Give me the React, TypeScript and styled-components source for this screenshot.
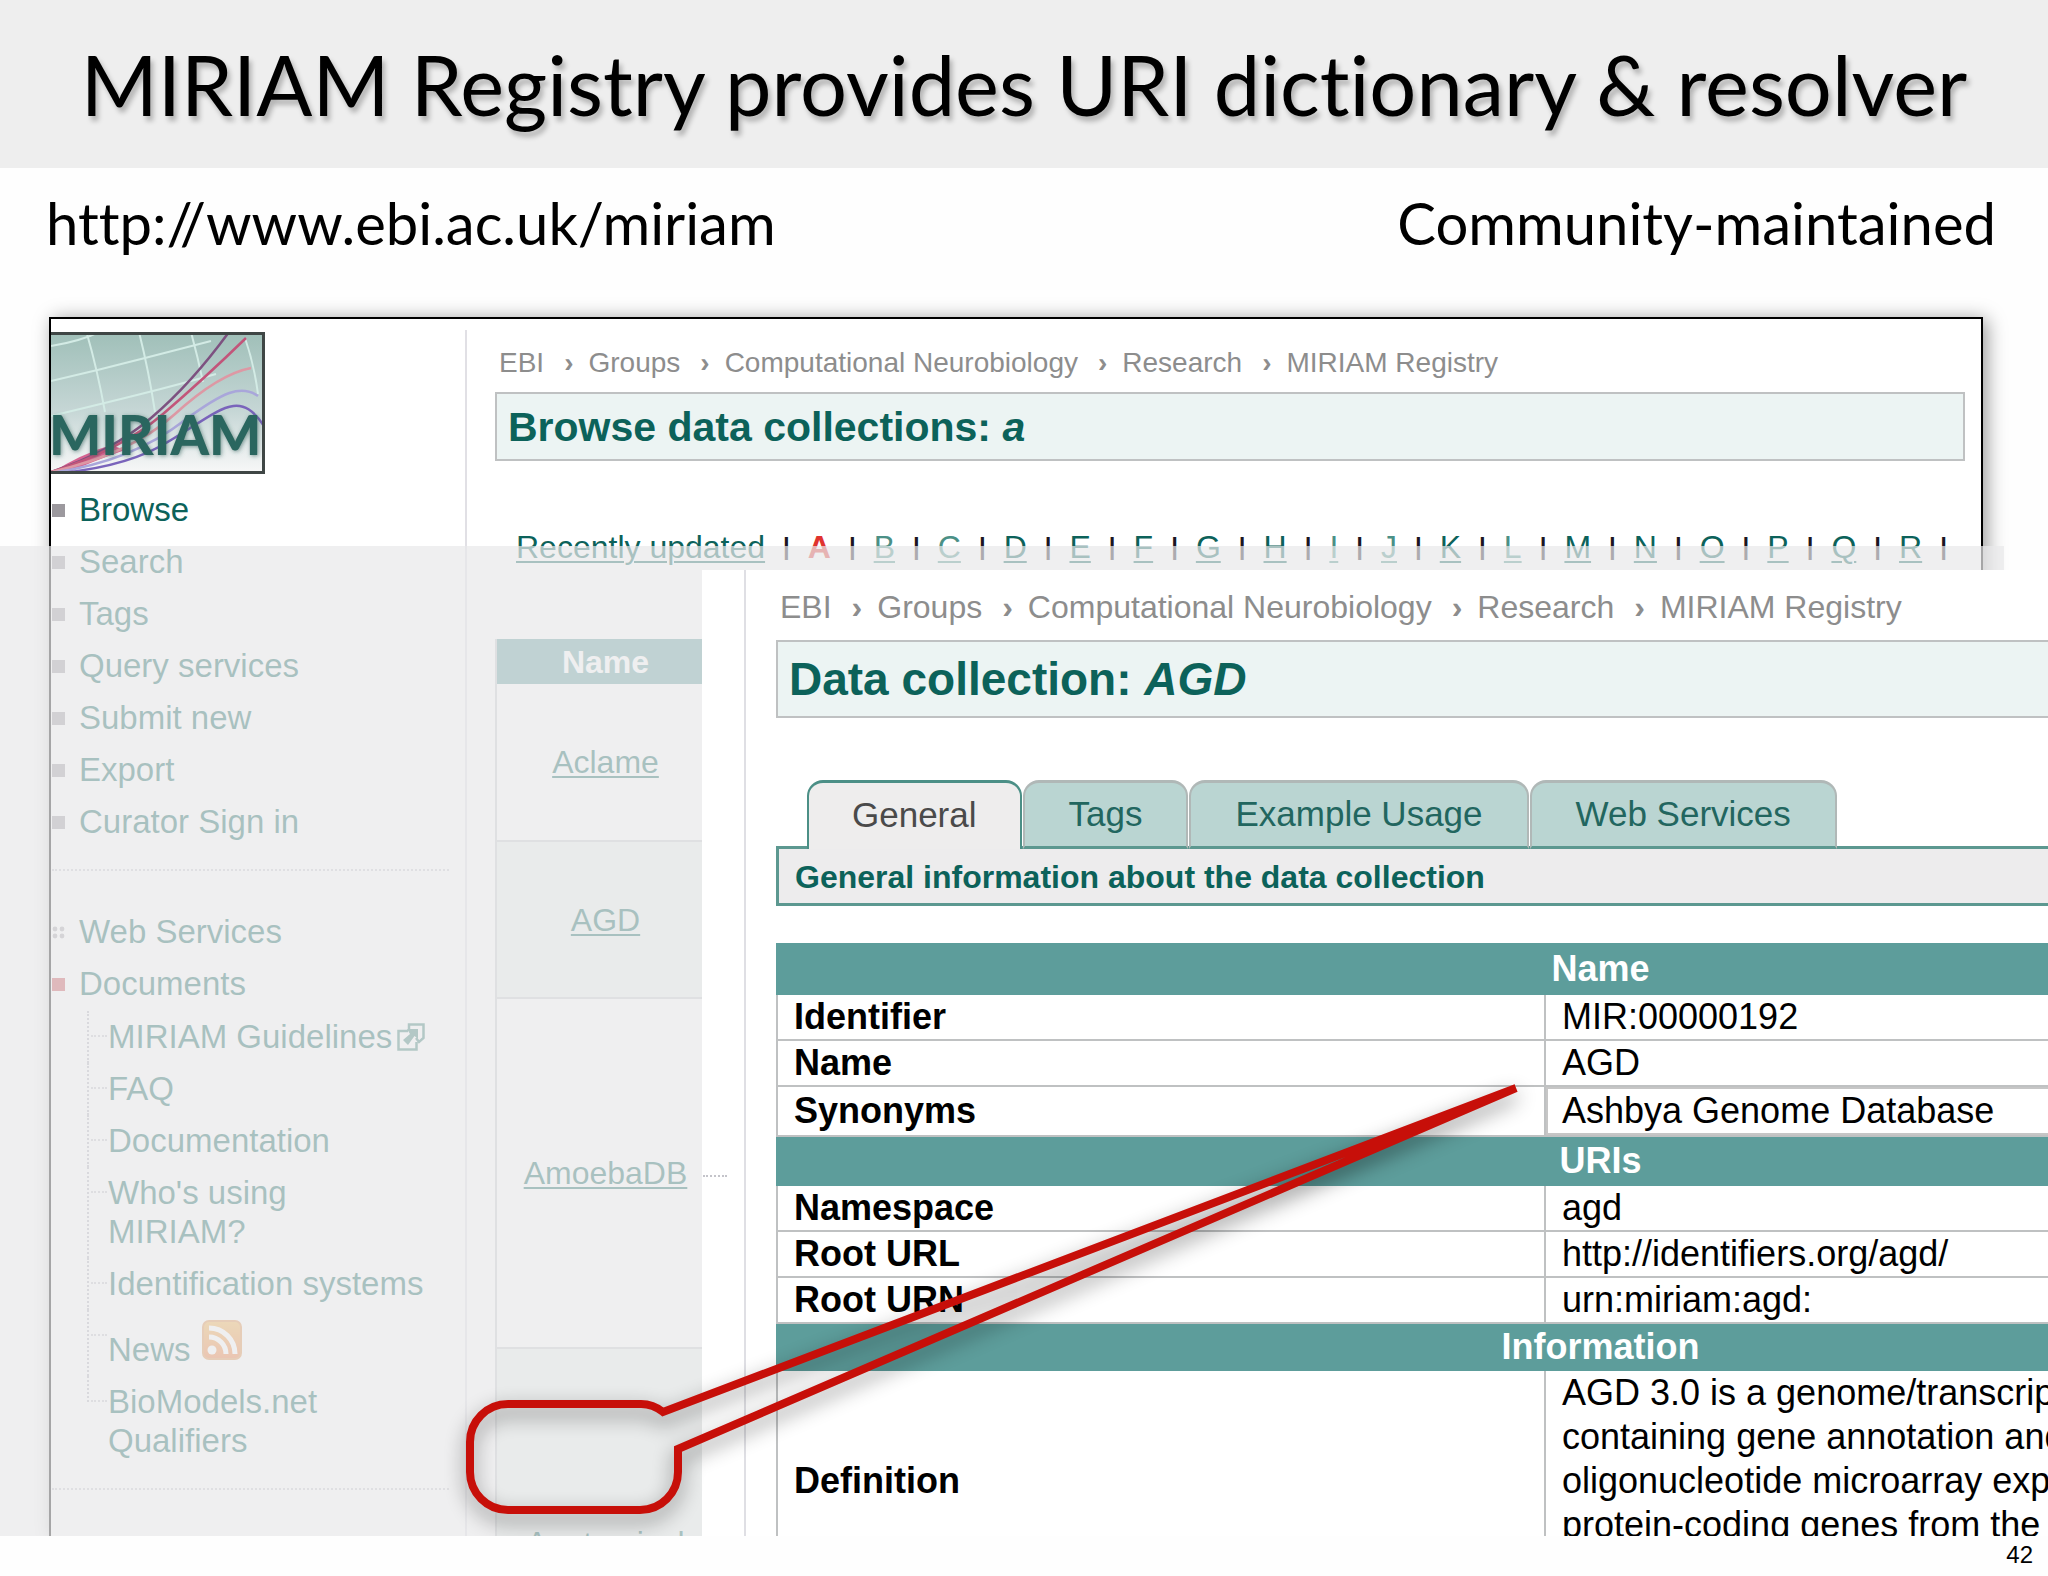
import React from 'react';
import styled, { createGlobalStyle } from 'styled-components';

const TEAL = '#0c625a';
const BAND = '#5d9d9b';
const LINE = '#bfc1c2';

const GlobalStyle = createGlobalStyle`
  *, *::before, *::after { box-sizing: border-box; }
  body {
    margin: 0;
    background: #fff;
    color: #000;
    font-family: "Liberation Sans", Arial, sans-serif;
  }
  a { color: inherit; text-decoration: none; }
  ul, ol { list-style: none; margin: 0; padding: 0; }
`;

const Slide = styled.main`
  display: flex;
  flex-direction: column;
  height: 100vh;
  overflow: hidden;
  background: #fefefe;
`;

const Banner = styled.header`
  display: flex;
  align-items: center;
  justify-content: center;
  height: 168px;
  flex: none;
  background: #eeeeee;
`;

const SlideTitle = styled.h1`
  margin: 0;
  font: 400 83px/100px Lato, "Gill Sans", sans-serif;
  font-variant-ligatures: none;
  white-space: nowrap;
  text-shadow: 3px 5px 5px rgba(0, 0, 0, 0.25);
`;

const SubRow = styled.div`
  display: flex;
  flex: none;
  align-items: center;
  justify-content: space-between;
  height: 129px;
  padding: 0 52px 20px 46px;
  font: 400 58px/76px Lato, "Gill Sans", sans-serif;
  font-variant-ligatures: none;
`;

const Stage = styled.div`
  position: relative;
  display: flex;
  flex: 1;
  min-height: 0;
  overflow: hidden;
  padding: 20px 65px 0 49px;
`;

const BrowseWindow = styled.section`
  display: flex;
  flex: 1;
  min-width: 0;
  border: 2px solid #000;
  border-bottom: 0;
  background: #fff;
  box-shadow: 4px 2px 18px rgba(0, 0, 0, 0.4);
`;

const Sidebar = styled.aside`
  flex: none;
  width: 416px;
  margin-top: 11px;
  padding-top: 2px;
  border-right: 2px solid #e1e0e5;
`;

const LogoDrawing = styled.svg`
  display: block;
  width: 214px;
  height: 142px;
`;

const Menu = styled.ul<{ $top: number }>`
  margin-top: ${(p) => p.$top}px;
  font-size: 33px;
  line-height: 52px;
  color: ${TEAL};
`;

const MenuLink = styled.a`
  display: flex;
  align-items: center;
  gap: 14px;
  padding-left: 1px;
`;

const Bullet = styled.span<{ $color: string }>`
  width: 13px;
  height: 13px;
  background: ${(p) => p.$color};
`;

const DotBullet = styled.svg`
  width: 13px;
  height: 13px;
`;

const Divider = styled.hr`
  height: 0;
  margin: 21px 16px 0 1px;
  border: 0;
  border-top: 2px dotted #c8c8ce;
`;

const SubMenu = styled.ul`
  margin: 1px 0 0 36px;
  line-height: 39px;
`;

const SubItem = styled.li<{ $tall?: boolean }>`
  position: relative;
  width: 340px;
  padding: ${(p) => (p.$tall ? '20px' : '6px')} 0 7px 21px;

  &::before {
    content: '';
    position: absolute;
    left: 0;
    top: 0;
    bottom: 0;
    border-left: 2px dotted #b4b4bd;
  }
  &:last-child::before { bottom: auto; height: 26px; }
  &::after {
    content: '';
    position: absolute;
    left: 4px;
    top: 24px;
    width: 16px;
    border-top: 2px dotted #c4c4cc;
  }
`;

const SubLink = styled.a`
  display: inline-flex;
  align-items: center;
  gap: 5px;
  white-space: nowrap;
`;

const ExternalIcon = styled.svg`
  width: 28px;
  height: 28px;
`;

const FeedIcon = styled.svg`
  width: 40px;
  height: 40px;
  margin: -20px 0 0 6px;
`;

const Content = styled.div`
  flex: 1;
  min-width: 0;
  padding: 26px 16px 0 28px;
`;

const Crumbs = styled.ol<{ $size: number }>`
  display: flex;
  align-items: center;
  padding-left: 4px;
  color: #8d8d8d;
  font-size: ${(p) => p.$size}px;
  line-height: 36px;
  white-space: nowrap;

  li + li::before {
    content: '›';
    margin: 0 15px 0 20px;
    font-weight: 700;
  }
`;

const TitleBox = styled.h2<{ $size: number; $height: number; $top: number }>`
  display: flex;
  align-items: center;
  height: ${(p) => p.$height}px;
  margin: ${(p) => p.$top}px 0 0;
  padding: 0 11px;
  border: 2px solid ${LINE};
  background: #ecf4f3;
  color: ${TEAL};
  font-size: ${(p) => p.$size}px;
  line-height: 48px;
  white-space: pre;
`;

const Alphabet = styled.nav`
  display: flex;
  align-items: center;
  margin-top: 67px;
  padding-left: 21px;
  font-size: 32px;
  line-height: 38px;
  white-space: nowrap;
`;

const LetterLink = styled.a<{ $tone?: 'current' | 'light' }>`
  color: ${(p) => (p.$tone === 'current' ? '#e0332f' : p.$tone === 'light' ? '#4b9086' : TEAL)};
  font-weight: ${(p) => (p.$tone === 'current' ? 700 : 400)};
  text-decoration: ${(p) => (p.$tone === 'current' ? 'none' : 'underline')};
  text-decoration-thickness: 2px;
  text-underline-offset: 3px;
`;

const Bar = styled.span`
  width: 7px;
  margin: 0 18px;
  color: #1b1622;
  font-size: 24px;
  font-weight: 700;
`;

const NameTable = styled.table`
  width: 219px;
  margin-top: 73px;
  border-collapse: collapse;
  border-left: 2px solid #c9cbd0;
  font-size: 32px;
  line-height: 38px;
  text-align: center;
  color: ${TEAL};

  th { height: 45px; padding: 0; background: ${BAND}; color: #fff; }
  td { padding: 0; border-bottom: 2px solid #c9cbd0; }
  tr:nth-child(even) td { background: #e9f2ee; }
  a { text-decoration: underline; text-decoration-thickness: 2px; text-underline-offset: 3px; }
`;

const NameRow = styled.tr<{ $height: number }>`
  height: ${(p) => p.$height}px;
`;

const Veil = styled.div`
  position: absolute;
  inset: 249px 44px 0 0;
  background: rgba(233, 232, 234, 0.71);
`;

const RecordWindow = styled.section`
  position: absolute;
  inset: 273px 0 0 702px;
  padding-left: 42px;
  overflow: hidden;
  background: #fff;
`;

const Stub = styled.span`
  position: absolute;
  left: 1px;
  top: 605px;
  width: 24px;
  border-top: 2px dotted #c4c4ca;
`;

const RecordBody = styled.div`
  height: 100%;
  padding: 19px 0 0 30px;
  border-left: 2px solid #dfdfe4;
`;

/* The record is wider than the window and runs past its right edge. */
const RecordSheet = styled.div`
  width: calc(100% + 377px);
`;

const TabList = styled.div`
  display: flex;
  gap: 1px;
  margin: 62px 0 -3px;
  padding-left: 31px;
`;

const Tab = styled.button<{ $active?: boolean }>`
  position: relative;
  height: 69px;
  padding: 0 ${(p) => (p.$active ? 43 : 44)}px 2px;
  border: 2px solid ${(p) => (p.$active ? '#4b8f86' : '#b0b8b7')};
  border-top-width: 3px;
  border-bottom: ${(p) => (p.$active ? '0' : '3px solid #5c9890')};
  border-radius: 16px 16px 0 0;
  background: ${(p) => (p.$active ? '#eeeded' : '#bad5d2')};
  color: ${(p) => (p.$active ? '#4a4a4a' : '#22665f')};
  font: 400 35px/40px "Liberation Sans", Arial, sans-serif;
`;

const InfoBar = styled.h3`
  margin: 0;
  height: 60px;
  padding: 0 16px;
  border: 3px solid #5c9890;
  background: #edeced;
  color: ${TEAL};
  font-size: 32px;
  line-height: 56px;
`;

const RecordTable = styled.table`
  width: 100%;
  margin-top: 37px;
  table-layout: fixed;
  border-collapse: collapse;
  border: 2px solid ${LINE};
  font-size: 36px;
  line-height: 44px;

  th, td { padding: 0 0 0 16px; text-align: left; border: 2px solid ${LINE}; }
  th[colspan] { padding: 0; text-align: center; background: ${BAND}; border-color: ${BAND}; color: #fff; }
`;

const LabelColumn = styled.col`
  width: 768px;
`;

const Row = styled.tr<{ $height: number }>`
  height: ${(p) => p.$height}px;
`;

const SynonymCell = styled.td`
  box-shadow: inset 0 0 0 2px #c6c6c6;
`;

const Callout = styled.svg`
  position: absolute;
  left: 0;
  top: 0;
  width: 1600px;
  height: 1240px;
  pointer-events: none;
  filter: drop-shadow(0 8px 10px rgba(0, 0, 0, 0.45));
`;

const PageNumber = styled.footer`
  flex: none;
  height: 40px;
  padding-right: 15px;
  font-size: 24px;
  line-height: 38px;
  text-align: right;
`;

const Logo = () => (
  <LogoDrawing viewBox="0 0 214 142" role="img" aria-label="MIRIAM">
    <defs>
      <linearGradient id="sky" x1="0" y1="0" x2="0" y2="1">
        <stop offset="0" stopColor="#9fbfb8" />
        <stop offset="0.55" stopColor="#c5d6d5" />
        <stop offset="0.85" stopColor="#e9eeee" />
        <stop offset="1" stopColor="#f8f8f8" />
      </linearGradient>
      <filter id="soft" x="-5%" y="-10%" width="112%" height="125%">
        <feDropShadow dx="1" dy="1" stdDeviation="2" floodColor="#2c5c54" floodOpacity="0.6" />
      </filter>
    </defs>
    <rect width="214" height="142" fill="url(#sky)" />
    <g fill="none" stroke="#d3ebe5" strokeWidth="2">
      <path d="M0 14Q30 9 48 0M0 49Q48 38 94 26T160 9M0 84Q50 72 90 62T165 42" />
      <path d="M36 2Q46 36 54 80M88 0Q98 40 104 80M140 0Q147 26 152 50M194 6Q203 32 207 62" />
    </g>
    <path d="M0 141Q30 122 60 113L74 118Q40 130 16 141Z" fill="#d24a80" opacity="0.85" />
    <g fill="none" strokeWidth="2.5">
      <path d="M0 140Q60 120 100 86T178 0" stroke="#7d5180" />
      <path d="M0 140Q70 118 112 82T195 6" stroke="#c2557a" />
      <path d="M0 140Q80 122 124 82T200 36" stroke="#dd98a4" />
      <path d="M0 141Q80 130 134 88C172 60 190 52 207 64" stroke="#a9a6da" />
      <path d="M10 141Q80 134 120 108C170 78 188 56 213 94" stroke="#7a64bb" />
    </g>
    <text
      x="-2"
      y="123"
      fill="#2c665e"
      fontFamily="Lato, sans-serif"
      fontWeight="900"
      fontSize="55"
      filter="url(#soft)"
    >
      MIRIAM
    </text>
    <path d="M0 1.5H212.5V140.5H0" fill="none" stroke="#3f4645" strokeWidth="3" />
  </LogoDrawing>
);

const CRUMBS = ['EBI', 'Groups', 'Computational Neurobiology', 'Research', 'MIRIAM Registry'];
const MENU = ['Browse', 'Search', 'Tags', 'Query services', 'Submit new', 'Export', 'Curator Sign in'];
const LETTERS = 'ABCDEFGHIJKLMNOPQR'.split('');
const NAMES: [string, number][] = [
  ['Aclame', 157],
  ['AGD', 157],
  ['AmoebaDB', 350],
  ['Anatomical', 390],
];

const Breadcrumbs = ({ size }: { size: number }) => (
  <Crumbs $size={size}>
    {CRUMBS.map((c) => (
      <li key={c}>
        <a href="#">{c}</a>
      </li>
    ))}
  </Crumbs>
);

const toneOf = (l: string) => (l === 'A' ? 'current' : 'BCIJL'.includes(l) ? 'light' : undefined);

export default function App() {
  return (
    <Slide>
      <GlobalStyle />
      <Banner>
        <SlideTitle>MIRIAM Registry provides URI dictionary &amp; resolver</SlideTitle>
      </Banner>
      <SubRow>
        <a href="#">http://www.ebi.ac.uk/miriam</a>
        <span>Community-maintained</span>
      </SubRow>

      <Stage>
        <BrowseWindow>
          <Sidebar>
            <Logo />
            <Menu $top={10}>
              {MENU.map((m) => (
                <li key={m}>
                  <MenuLink href="#">
                    <Bullet $color="#9c999e" />
                    {m}
                  </MenuLink>
                </li>
              ))}
            </Menu>
            <Divider />
            <Menu $top={35}>
              <li>
                <MenuLink href="#">
                  <DotBullet viewBox="0 0 13 13" fill="#a5a3a8">
                    <circle cx="3" cy="3" r="2.4" />
                    <circle cx="10" cy="3" r="2.4" />
                    <circle cx="3" cy="10" r="2.4" />
                    <circle cx="10" cy="10" r="2.4" />
                  </DotBullet>
                  Web Services
                </MenuLink>
              </li>
              <li>
                <MenuLink href="#">
                  <Bullet $color="#c9474d" />
                  Documents
                </MenuLink>
                <SubMenu>
                  <SubItem>
                    <SubLink href="#">
                      MIRIAM Guidelines
                      <ExternalIcon viewBox="0 0 28 28" fill="none" stroke="#33796f" strokeWidth="2.5">
                        <path d="M11 8H1.5V26.5H19.5V19M12 8V1.5H26.5V15L22 19L19 15" />
                        <path d="M21 6V16L17.5 13L11 22L6 17L13 11L10 6Z" fill="#33796f" stroke="none" />
                      </ExternalIcon>
                    </SubLink>
                  </SubItem>
                  <SubItem><SubLink href="#">FAQ</SubLink></SubItem>
                  <SubItem><SubLink href="#">Documentation</SubLink></SubItem>
                  <SubItem><SubLink href="#">Who's using<br />MIRIAM?</SubLink></SubItem>
                  <SubItem><SubLink href="#">Identification systems</SubLink></SubItem>
                  <SubItem $tall>
                    <SubLink href="#">
                      News
                      <FeedIcon viewBox="0 0 40 40">
                        <defs>
                          <linearGradient id="feed" x1="0" y1="0" x2="0" y2="1">
                            <stop offset="0" stopColor="#f3b042" />
                            <stop offset="1" stopColor="#ee6f2c" />
                          </linearGradient>
                        </defs>
                        <rect x="1" y="1" width="38" height="38" rx="6" fill="url(#feed)" stroke="#e08a40" strokeWidth="2" />
                        <circle cx="10" cy="30" r="4.5" fill="#fff" />
                        <path d="M7 17A17 17 0 0 1 24 34M7 8A26 26 0 0 1 33 34" fill="none" stroke="#fff" strokeWidth="5" />
                      </FeedIcon>
                    </SubLink>
                  </SubItem>
                  <SubItem><SubLink href="#">BioModels.net<br />Qualifiers</SubLink></SubItem>
                </SubMenu>
              </li>
            </Menu>
            <Divider />
          </Sidebar>

          <Content>
            <Breadcrumbs size={28} />
            <TitleBox $size={41} $height={69} $top={11}>
              Browse data collections: <em>a</em>
            </TitleBox>
            <Alphabet>
              <LetterLink href="#">Recently updated</LetterLink>
              <Bar>|</Bar>
              {LETTERS.map((l) => (
                <React.Fragment key={l}>
                  <LetterLink href="#" $tone={toneOf(l)}>{l}</LetterLink>
                  <Bar>|</Bar>
                </React.Fragment>
              ))}
            </Alphabet>
            <NameTable>
              <thead>
                <tr><th>Name</th></tr>
              </thead>
              <tbody>
                {NAMES.map(([name, height]) => (
                  <NameRow key={name} $height={height}>
                    <td><a href="#">{name}</a></td>
                  </NameRow>
                ))}
              </tbody>
            </NameTable>
          </Content>
        </BrowseWindow>

        <Veil />

        <RecordWindow>
          <Stub />
          <RecordBody>
            <RecordSheet>
              <Breadcrumbs size={32} />
              <TitleBox $size={46} $height={78} $top={15}>
                Data collection: <em>AGD</em>
              </TitleBox>
              <TabList role="tablist">
                <Tab role="tab" $active aria-selected>General</Tab>
                <Tab role="tab">Tags</Tab>
                <Tab role="tab">Example Usage</Tab>
                <Tab role="tab">Web Services</Tab>
              </TabList>
              <InfoBar>General information about the data collection</InfoBar>
              <RecordTable>
                <colgroup>
                  <LabelColumn />
                  <col />
                </colgroup>
                <tbody>
                  <Row $height={50}><th colSpan={2}>Name</th></Row>
                  <Row $height={46}><th>Identifier</th><td>MIR:00000192</td></Row>
                  <Row $height={46}><th>Name</th><td>AGD</td></Row>
                  <Row $height={50}><th>Synonyms</th><SynonymCell>Ashbya Genome Database</SynonymCell></Row>
                  <Row $height={49}><th colSpan={2}>URIs</th></Row>
                  <Row $height={46}><th>Namespace</th><td>agd</td></Row>
                  <Row $height={46}><th>Root URL</th><td>http://identifiers.org/agd/</td></Row>
                  <Row $height={46}><th>Root URN</th><td>urn:miriam:agd:</td></Row>
                  <Row $height={47}><th colSpan={2}>Information</th></Row>
                  <Row $height={222}>
                    <th>Definition</th>
                    <td>
                      AGD 3.0 is a genome/transcriptome database containing gene annotation and high-density
                      oligonucleotide microarray expression profiles for protein-coding genes from the
                      yeasts Ashbya gossypii and Saccharomyces cerevisiae.
                    </td>
                  </Row>
                </tbody>
              </RecordTable>
            </RecordSheet>
          </RecordBody>
        </RecordWindow>

        <Callout viewBox="0 297 1600 1240" aria-hidden="true">
          <path
            d="M508 1404H641Q653 1404 663 1412L1516 1088L678 1449V1472A38 38 0 0 1 640 1510H508A38 38 0 0 1 470 1472V1442A38 38 0 0 1 508 1404Z"
            fill="none"
            stroke="#c70f09"
            strokeWidth="8"
          />
        </Callout>
      </Stage>
      <PageNumber>42</PageNumber>
    </Slide>
  );
}
